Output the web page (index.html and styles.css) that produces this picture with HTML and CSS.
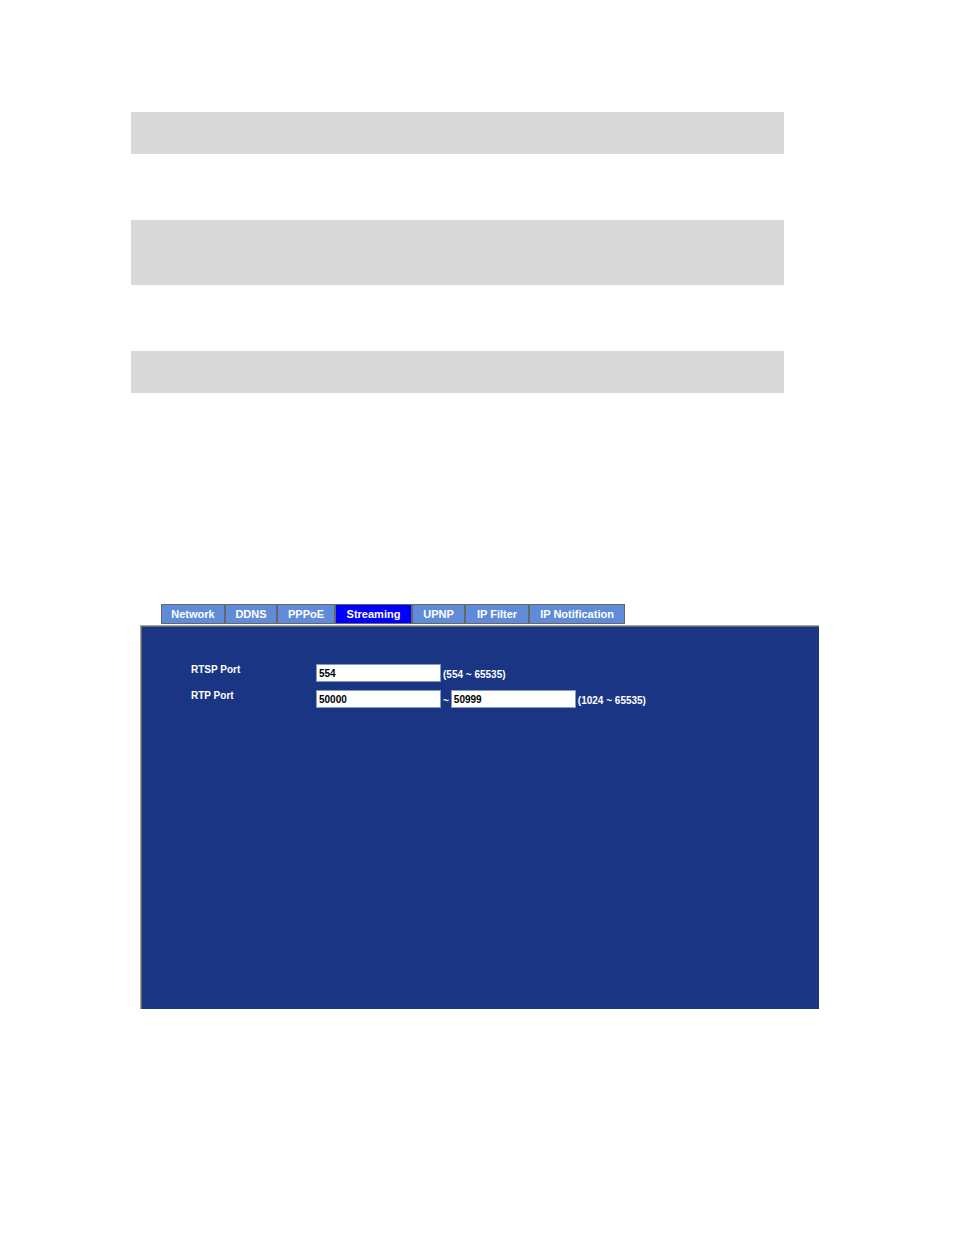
FILE: index.html
```html
<!DOCTYPE html>
<html lang="en">
<head>
<meta charset="utf-8">
<title>Streaming</title>
<link rel="stylesheet" href="styles.css">
</head>
<body>
<main class="page">
  <section class="notes">
    <div class="note"></div>
    <div class="note note-tall"></div>
    <div class="note"></div>
  </section>
  <section class="settings">
    <nav class="tabs">
      <button class="tab" type="button">Network</button>
      <button class="tab" type="button">DDNS</button>
      <button class="tab" type="button">PPPoE</button>
      <button class="tab active" type="button">Streaming</button>
      <button class="tab" type="button">UPNP</button>
      <button class="tab" type="button">IP Filter</button>
      <button class="tab" type="button">IP Notification</button>
    </nav>
    <form class="panel">
      <div class="row">
        <label class="name" for="rtsp">RTSP Port</label>
        <div class="fields">
          <input class="port" id="rtsp" type="text" value="554">
          <span class="hint">(554 ~ 65535)</span>
        </div>
      </div>
      <div class="row">
        <label class="name" for="rtp-from">RTP Port</label>
        <div class="fields">
          <input class="port" id="rtp-from" type="text" value="50000">
          <label class="hint" for="rtp-to">~</label>
          <input class="port" id="rtp-to" type="text" value="50999">
          <span class="hint">(1024 ~ 65535)</span>
        </div>
      </div>
    </form>
  </section>
</main>
</body>
</html>
```
FILE: styles.css
```css
* {
  box-sizing: border-box;
}

body {
  margin: 0;
  background: #fff;
  font-family: "Liberation Sans", Arial, sans-serif;
}

.page {
  padding: 112px 135px 226px 131px;
}

.notes {
  display: flex;
  flex-direction: column;
  gap: 66px;
  margin-right: 35px;
}

.note {
  min-height: 42px;
  background: #d9d9d9;
}

.note-tall {
  min-height: 65px;
}

.settings {
  margin: 211px 0 0 9px;
}

.tabs {
  display: grid;
  grid-template-columns: 64px 52px 58px 77px 53px 64px 96px;
  margin: 0 0 1px 21px;
}

.tab {
  height: 20px;
  padding: 0;
  border: 1px solid #666;
  background: #5f8bd8;
  color: #fff;
  font: bold 11px/18px "Liberation Sans", Arial, sans-serif;
  white-space: nowrap;
}

.tab.active {
  background: #00f;
}

.panel {
  display: flex;
  flex-direction: column;
  gap: 8px;
  min-height: 384px;
  padding: 38px 16px 16px 50px;
  border: solid #aca899;
  border-width: 1px 0 0 1px;
  background: #193584;
  box-shadow: inset 1px 1px #666;
  color: #fff;
  font-size: 10px;
  font-weight: bold;
  line-height: 12px;
}

.row {
  display: grid;
  grid-template-columns: 125px 1fr;
}

.fields {
  display: flex;
  align-items: center;
  gap: 2px;
}

.hint {
  padding-top: 3px;
  white-space: nowrap;
}

.port {
  width: 125px;
  height: 18px;
  padding: 0 2px;
  border: 1px solid #7f9db9;
  background: #fff;
  color: #000;
  font: bold 10px/16px "Liberation Sans", Arial, sans-serif;
}
```
